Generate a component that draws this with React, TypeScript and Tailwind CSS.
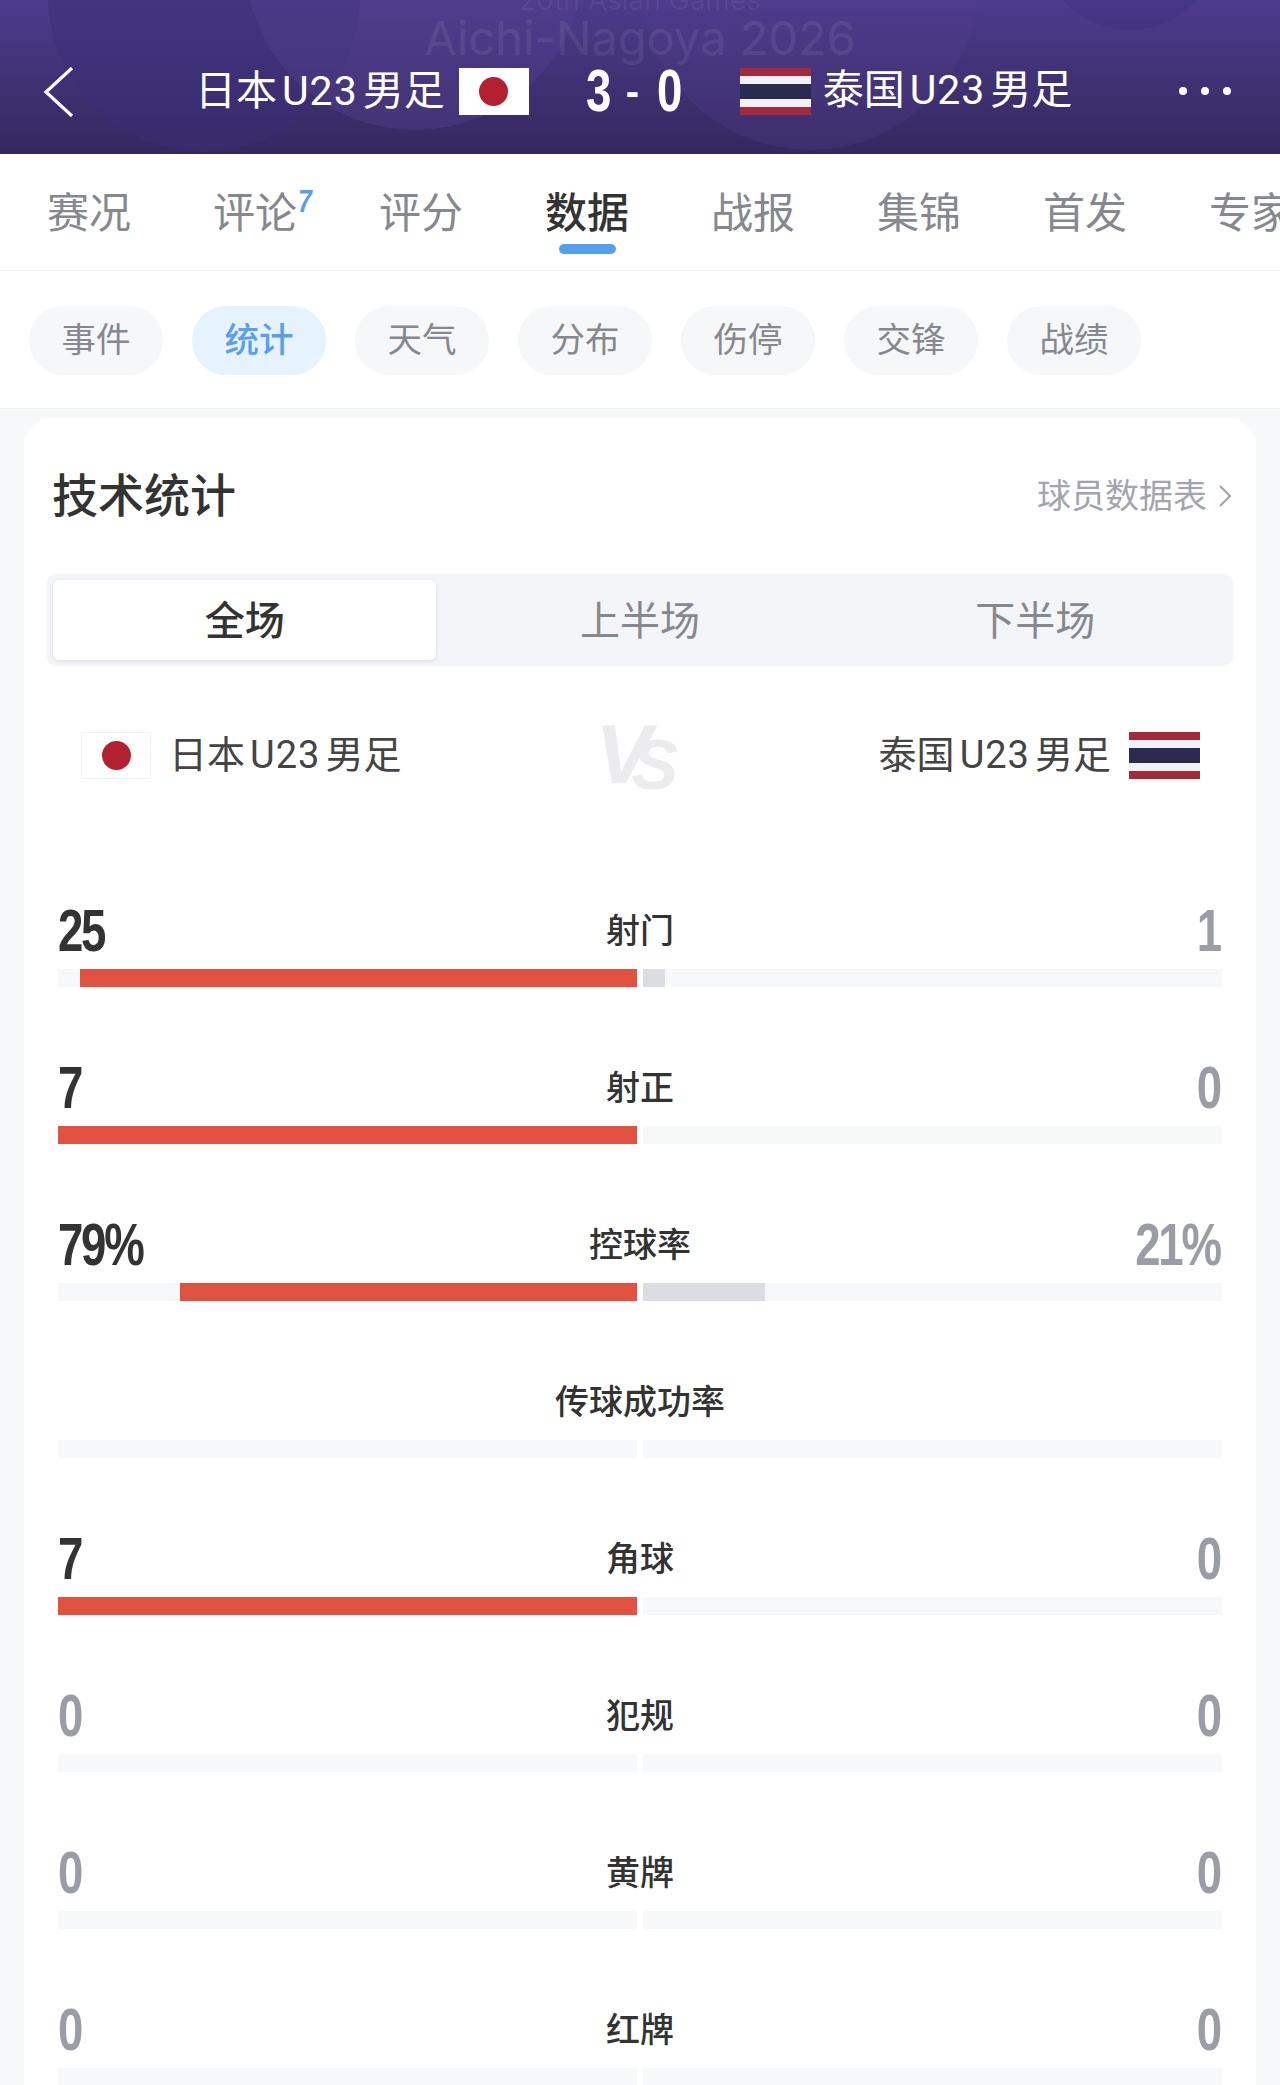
const tabs = ['赛况', '评论', '评分', '数据', '战报', '集锦', '首发', '专家'];
const pills = ['事件', '统计', '天气', '分布', '伤停', '交锋', '战绩'];

type Stat = {
    label: string;
    home: string;
    away: string;
    homePct: number;
    awayPct: number;
};

const stats: Stat[] = [
    { label: '射门', home: '25', away: '1', homePct: 96.2, awayPct: 3.8 },
    { label: '射正', home: '7', away: '0', homePct: 100, awayPct: 0 },
    { label: '控球率', home: '79%', away: '21%', homePct: 79, awayPct: 21 },
    { label: '传球成功率', home: '', away: '', homePct: 0, awayPct: 0 },
    { label: '角球', home: '7', away: '0', homePct: 100, awayPct: 0 },
    { label: '犯规', home: '0', away: '0', homePct: 0, awayPct: 0 },
    { label: '黄牌', home: '0', away: '0', homePct: 0, awayPct: 0 },
    { label: '红牌', home: '0', away: '0', homePct: 0, awayPct: 0 },
];

function JapanFlag({ bordered }: { bordered?: boolean }) {
    return (
        <div
            className={`flex h-[47px] w-[70px] shrink-0 items-center justify-center bg-white ${
                bordered ? 'border border-[#f0f1f3]' : ''
            }`}
        >
            <div className="h-[29px] w-[29px] rounded-full bg-[#b3202f]" />
        </div>
    );
}

function ThaiFlag() {
    return (
        <div className="flex h-[47px] w-[71px] shrink-0 flex-col">
            <div className="h-[8px] bg-[#a32a3a]" />
            <div className="h-[8px] bg-[#f2f2f6]" />
            <div className="h-[15px] bg-[#2d2a4f]" />
            <div className="h-[8px] bg-[#f2f2f6]" />
            <div className="h-[8px] bg-[#a32a3a]" />
        </div>
    );
}

function TeamName({ a, b }: { a: string; b: string }) {
    return (
        <span className="whitespace-nowrap leading-none">
            {a}
            <span className="mx-[5px] tracking-[1px]">U23</span>
            {b}
        </span>
    );
}

function StatRow({ stat }: { stat: Stat }) {
    const homeZero = stat.home === '0';
    return (
        <div className="h-[157px]">
            <div className="grid h-[62px] grid-cols-[1fr_auto_1fr] items-center">
                <span
                    className={`origin-left scale-x-[.76] font-['Liberation_Sans',sans-serif] text-[60px] leading-none font-bold tracking-[-3px] ${
                        homeZero ? 'text-[#9a9da6]' : 'text-[#333333]'
                    }`}
                >
                    {stat.home}
                </span>
                <span className="text-[34px] leading-none font-medium text-[#333333]">{stat.label}</span>
                <span className="origin-right scale-x-[.76] pr-[3px] text-right font-['Liberation_Sans',sans-serif] text-[60px] leading-none font-bold tracking-[-3px] text-[#9a9da6]">
                    {stat.away}
                </span>
            </div>
            <div className="mt-[7px] flex h-[18px] gap-[6px]">
                <div className="flex flex-1 justify-end bg-[#f7f8fa]">
                    <div className="h-full bg-[#e15241]" style={{ width: `${stat.homePct}%` }} />
                </div>
                <div className="flex-1 bg-[#f7f8fa]">
                    <div className="h-full bg-[#dcdde2]" style={{ width: `${stat.awayPct}%` }} />
                </div>
            </div>
        </div>
    );
}

export default function App() {
    return (
        <div className="h-[2085px] w-[1280px] overflow-hidden bg-[#f7f8fa] font-['Roboto','Noto_Sans_CJK_SC',sans-serif]">
            {/* Header */}
            <header className="relative flex h-[154px] items-end overflow-hidden bg-gradient-to-b from-[#4d3b8c] to-[#35285f] pb-[39px] text-[41px] text-white">
                <div className="absolute top-[-160px] left-[48px] h-[312px] w-[312px] rounded-full bg-[#3a2d75]/50" />
                <div className="absolute top-[-210px] left-[245px] h-[340px] w-[340px] rounded-full bg-[#54408f]/40" />
                <div className="absolute top-[-190px] left-[640px] h-[340px] w-[340px] rounded-full bg-[#54418e]/25" />
                <div className="absolute top-[-150px] left-[1040px] h-[180px] w-[180px] rounded-full bg-[#3f3180]/40" />
                <div className="absolute top-[-14px] left-0 w-full text-center font-['Inter',sans-serif] text-[28px] leading-none text-white/[.06]">
                    20th Asian Games
                </div>
                <div className="absolute top-[14px] left-0 w-full text-center font-['Inter',sans-serif] text-[47px] leading-none text-white/[.07]">
                    Aichi-Nagoya 2026
                </div>

                <div className="relative flex h-[48px] w-full items-center">
                    <svg
                        className="absolute top-[-1px] left-[42px]"
                        width="34"
                        height="52"
                        viewBox="0 0 34 52"
                        fill="none"
                        stroke="currentColor"
                        strokeWidth="3.2"
                    >
                        <polyline points="30,2 4,26 30,50" />
                    </svg>
                    <div className="ml-[195px] flex items-center">
                        <TeamName a="日本" b="男足" />
                        <div className="ml-[14px]">
                            <JapanFlag />
                        </div>
                    </div>
                    <div className="ml-[57px] flex w-[96px] items-center justify-between font-['Liberation_Sans',sans-serif] text-[60px] leading-none font-bold">
                        <span className="w-[25px] origin-left scale-x-[.76]">3</span>
                        <span className="w-[16px] text-[40px]">-</span>
                        <span className="w-[25px] origin-left scale-x-[.76]">0</span>
                    </div>
                    <div className="ml-[58px] flex items-center">
                        <ThaiFlag />
                        <div className="ml-[12px]">
                            <TeamName a="泰国" b="男足" />
                        </div>
                    </div>
                    <div className="ml-auto mr-[49px] flex gap-[14px]">
                        <div className="h-[8px] w-[8px] rounded-full bg-white" />
                        <div className="h-[8px] w-[8px] rounded-full bg-white" />
                        <div className="h-[8px] w-[8px] rounded-full bg-white" />
                    </div>
                </div>
            </header>

            {/* Main tabs */}
            <nav className="flex h-[117px] gap-[82px] overflow-hidden border-b border-[#f2f3f5] bg-white pt-[38px] pl-[47px]">
                {tabs.map((tab) => {
                    const active = tab === '数据';
                    return (
                        <div key={tab} className="relative h-[44px] shrink-0">
                            <span
                                className={`text-[42px] leading-[44px] ${
                                    active ? 'font-medium text-[#333333]' : 'text-[#85888e]'
                                }`}
                            >
                                {tab}
                            </span>
                            {tab === '评论' && (
                                <span className="absolute top-[-6px] left-full ml-[1px] origin-left scale-x-[.8] font-['Liberation_Sans',sans-serif] text-[31px] leading-none font-bold italic text-[#5a9fec]">
                                    7
                                </span>
                            )}
                            {active && (
                                <div className="absolute top-[52px] left-[14px] h-[10px] w-[57px] rounded-full bg-[#559ff0]" />
                            )}
                        </div>
                    );
                })}
            </nav>

            {/* Sub tabs */}
            <div className="flex h-[138px] gap-[29px] border-b border-[#eff0f2] bg-white pt-[35px] pl-[29px]">
                {pills.map((pill) => {
                    const active = pill === '统计';
                    return (
                        <div
                            key={pill}
                            className={`flex h-[69px] w-[134px] items-center justify-center rounded-[34px] text-[34.5px] ${
                                active ? 'bg-[#e6f2fe] font-medium text-[#5a9fec]' : 'bg-[#f6f7f9] text-[#85888e]'
                            }`}
                        >
                            {pill}
                        </div>
                    );
                })}
            </div>

            {/* Stats card */}
            <section className="mx-[24px] mt-[9px] rounded-t-[28px] bg-white px-[24px] pt-[48px]">
                <div className="flex h-[60px] items-center justify-between pl-[4px]">
                    <h2 className="text-[46px] leading-none font-medium text-[#333333]">技术统计</h2>
                    <div className="flex items-center text-[34px] leading-none text-[#a2a5ad]">
                        球员数据表
                        <svg
                            className="ml-[11px]"
                            width="14"
                            height="26"
                            viewBox="0 0 14 26"
                            fill="none"
                            stroke="currentColor"
                            strokeWidth="2.2"
                        >
                            <polyline points="2,3 12,13 2,23" />
                        </svg>
                    </div>
                </div>

                <div className="-mx-[1px] mt-[48px] grid h-[92px] grid-cols-3 rounded-[8px] bg-[#f4f5f8] text-[40px]">
                    <div className="p-[6px]">
                        <div className="flex h-full items-center justify-center rounded-[6px] bg-white pt-[3px] font-medium text-[#333333] shadow-[0_1px_4px_rgba(0,0,0,0.12)]">
                            全场
                        </div>
                    </div>
                    <div className="flex items-center justify-center pt-[3px] text-[#85888e]">上半场</div>
                    <div className="flex items-center justify-center pt-[3px] text-[#85888e]">下半场</div>
                </div>

                <div className="mt-[66px] flex h-[47px] items-center pr-[32px] pl-[33px] text-[38px] text-[#444444]">
                    <JapanFlag bordered />
                    <div className="ml-[18px]">
                        <TeamName a="日本" b="男足" />
                    </div>
                    <div className="ml-[194px] flex items-start font-['Liberation_Sans',sans-serif] leading-none font-bold italic text-[#ececee]">
                        <span className="text-[84px]">V</span>
                        <span className="mt-[18px] -ml-[20px] text-[70px]">S</span>
                    </div>
                    <div className="mr-[18px] ml-auto">
                        <TeamName a="泰国" b="男足" />
                    </div>
                    <ThaiFlag />
                </div>

                <div className="mt-[121px] px-[10px]">
                    {stats.map((stat) => (
                        <StatRow key={stat.label} stat={stat} />
                    ))}
                </div>
            </section>
        </div>
    );
}
